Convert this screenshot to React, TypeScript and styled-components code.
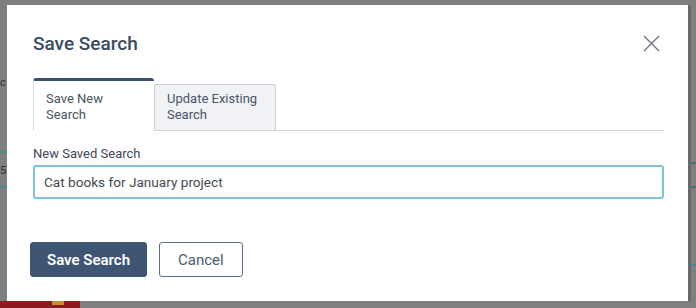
import styled, { createGlobalStyle } from "styled-components";

const GlobalStyle = createGlobalStyle`
  html, body {
    margin: 0;
    padding: 0;
    background: #7f7f7f;
  }
  body {
    font-family: Roboto, "Liberation Sans", Arial, sans-serif;
  }
`;

const Backdrop = styled.div`
  position: relative;
  width: 696px;
  height: 308px;
  box-sizing: border-box;
  padding: 5px 8px 7px 7px;
  background: #7f7f7f;
  overflow: hidden;
`;

// fragments of the page that sits behind the overlay
const Behind = styled.div<{ $top: number; $left: number; $w: number; $h: number; $bg: string }>`
  position: absolute;
  top: ${(p) => p.$top}px;
  left: ${(p) => p.$left}px;
  width: ${(p) => p.$w}px;
  height: ${(p) => p.$h}px;
  background: ${(p) => p.$bg};
`;

const BehindGlyph = styled.span<{ $top: number; $left: number }>`
  position: absolute;
  top: ${(p) => p.$top}px;
  left: ${(p) => p.$left}px;
  font-size: 11px;
  line-height: 12px;
  color: #2a2f36;
`;

const Modal = styled.div`
  position: relative;
  z-index: 1;
  height: 100%;
  background: #ffffff;
  box-shadow: 3px 0 0 #6a6a6a;
  box-sizing: border-box;
  padding: 27px 24px 24px 26px;
  display: flex;
  flex-direction: column;
`;

const Header = styled.div`
  display: flex;
  align-items: center;
  justify-content: space-between;
`;

const Title = styled.h2`
  margin: 0;
  font-size: 19px;
  line-height: 23px;
  font-weight: 500;
  color: #3a4b60;
`;

const CloseButton = styled.button`
  border: 0;
  background: none;
  padding: 0;
  margin-right: 4px;
  width: 18px;
  height: 18px;
  display: flex;
  align-items: center;
  justify-content: center;
  cursor: pointer;
`;

const Tabs = styled.div`
  margin-top: 23px;
  display: flex;
  align-items: flex-end;
  border-bottom: 1.5px solid #d2d5da;
`;

const Tab = styled.div<{ $active?: boolean }>`
  box-sizing: border-box;
  width: ${(p) => (p.$active ? 121 : 122)}px;
  height: ${(p) => (p.$active ? 53 : 47)}px;
  margin-bottom: -1.5px;
  padding: ${(p) => (p.$active ? "10px 12px 0" : "6px 12px 0")};
  font-size: 13px;
  line-height: 16px;
  color: #4a5565;
  background: ${(p) => (p.$active ? "#ffffff" : "#f0f2f5")};
  border: 1px solid ${(p) => (p.$active ? "#d6d9de" : "#c9ced5")};
  border-top: ${(p) => (p.$active ? "3px solid #3b4f6a" : "1px solid #c9ced5")};
  border-bottom: ${(p) => (p.$active ? "1.5px solid #ffffff" : "1.5px solid #d2d5da")};
  border-radius: 3px 3px 0 0;
  ${(p) => (p.$active ? "border-right: 0;" : "")}
`;

const Label = styled.label`
  margin-top: 15px;
  font-size: 13px;
  line-height: 16px;
  color: #3f4957;
`;

const Input = styled.input`
  margin-top: 3px;
  height: 36px;
  box-sizing: border-box;
  border: 2px solid #7dc3df;
  border-radius: 3px;
  padding: 0 9px;
  font-family: inherit;
  font-size: 13.6px;
  color: #454b52;
  outline: none;
  caret-color: #222;
`;

const Actions = styled.div`
  margin-top: 43px;
  margin-left: -3px;
  display: flex;
  gap: 12px;
`;

const Button = styled.button<{ $primary?: boolean }>`
  height: 35px;
  box-sizing: border-box;
  padding: 0 ${(p) => (p.$primary ? 16 : 18)}px;
  border-radius: 3px;
  font-family: inherit;
  font-size: 15px;
  font-weight: ${(p) => (p.$primary ? 600 : 400)};
  color: ${(p) => (p.$primary ? "#ffffff" : "#4a5a70")};
  background: ${(p) => (p.$primary ? "#3e5674" : "#ffffff")};
  border: 1.5px solid ${(p) => (p.$primary ? "#3e5674" : "#5b6f8a")};
  cursor: pointer;
`;

export default function App() {
  return (
    <>
      <GlobalStyle />
      <Backdrop>
        <Behind $top={151} $left={0} $w={7} $h={2} $bg="#4d8a90" />
        <Behind $top={186} $left={0} $w={7} $h={2} $bg="#4d8a90" />
        <Behind $top={162} $left={688} $w={8} $h={2} $bg="#4d6a70" />
        <Behind $top={186} $left={688} $w={8} $h={2} $bg="#4d6a70" />
        <Behind $top={264} $left={690} $w={6} $h={2} $bg="#3e8a96" />
        <Behind $top={301} $left={0} $w={80} $h={7} $bg="#8c1b1b" />
        <Behind $top={301} $left={52} $w={12} $h={4} $bg="#c9902a" />
        <BehindGlyph $top={77} $left={0}>c</BehindGlyph>
        <BehindGlyph $top={165} $left={0}>5</BehindGlyph>
        <Modal>
          <Header>
            <Title>Save Search</Title>
            <CloseButton aria-label="Close">
              <svg width="17" height="17" viewBox="0 0 17 17">
                <path d="M1 1L16 16M16 1L1 16" stroke="#6b7380" strokeWidth="1.4" fill="none" />
              </svg>
            </CloseButton>
          </Header>
          <Tabs>
            <Tab $active>
              Save New
              <br />
              Search
            </Tab>
            <Tab>
              Update Existing
              <br />
              Search
            </Tab>
          </Tabs>
          <Label>New Saved Search</Label>
          <Input defaultValue="Cat books for January project" />
          <Actions>
            <Button $primary>Save Search</Button>
            <Button>Cancel</Button>
          </Actions>
        </Modal>
      </Backdrop>
    </>
  );
}
